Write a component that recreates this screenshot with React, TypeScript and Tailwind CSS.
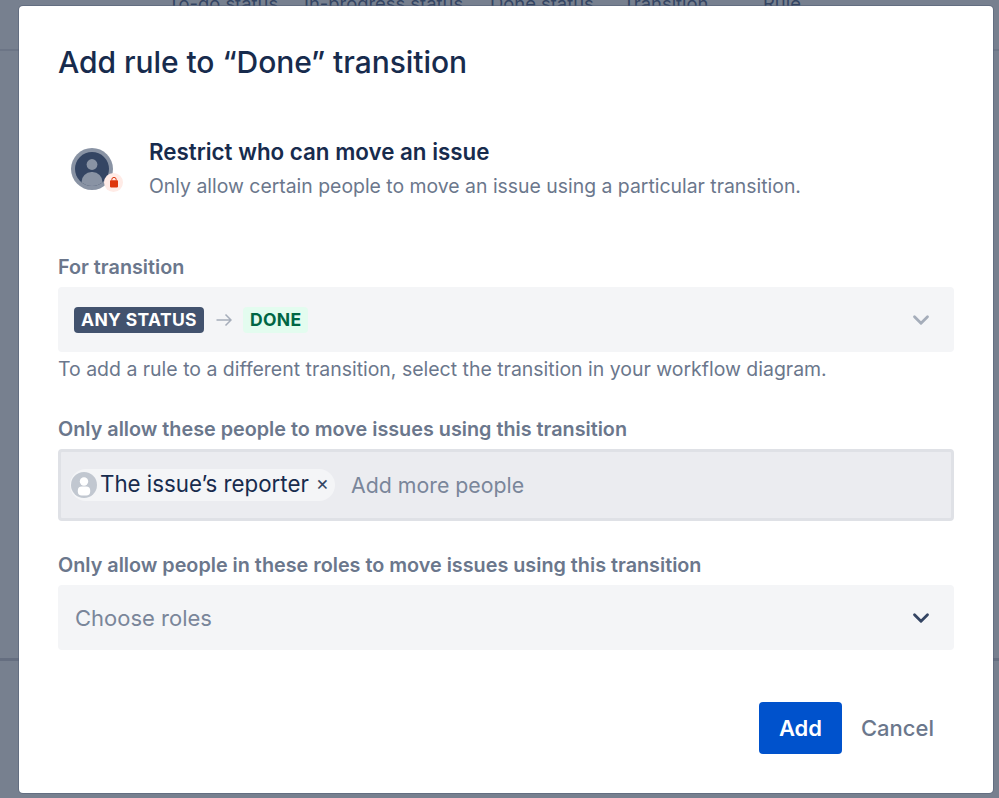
import { ChevronDown } from 'lucide-react'

const font = { fontFamily: 'Inter, "Liberation Sans", sans-serif' }

function RuleIcon() {
  return (
    <div className="relative h-[42px] w-[42px] rounded-full bg-[#8993a4] p-[4px]">
      <svg viewBox="0 0 34 34" className="h-[34px] w-[34px]">
        <defs>
          <clipPath id="rule-avatar">
            <circle cx="17" cy="17" r="17" />
          </clipPath>
        </defs>
        <g clipPath="url(#rule-avatar)">
          <rect width="34" height="34" fill="#344563" />
          <circle cx="17" cy="12.5" r="5.4" fill="#8993a4" />
          <rect x="6.5" y="20" width="21" height="20" rx="10" fill="#8993a4" />
        </g>
      </svg>
      <div className="absolute left-[33px] top-[25px] flex h-[19px] w-[19px] items-center justify-center rounded-full bg-[#ffebe6]">
        <svg viewBox="0 0 10 11" className="h-[11px] w-[10px]">
          <path d="M2.8 3.4V2.6a2.2 2.2 0 0 1 4.4 0v.8" fill="none" stroke="#de350b" strokeWidth="1" />
          <rect x="1" y="3.2" width="8" height="7.2" rx="0.8" fill="#de350b" />
        </svg>
      </div>
    </div>
  )
}

function SmallAvatar() {
  return (
    <svg viewBox="0 0 26 26" className="h-[26px] w-[26px] shrink-0">
      <circle cx="13" cy="13" r="13" fill="#c1c7d0" />
      <circle cx="13" cy="9.5" r="4.2" fill="#ffffff" />
      <rect x="6.8" y="14.5" width="12.4" height="9" rx="4" fill="#ffffff" />
    </svg>
  )
}

function Label({ children }: { children: React.ReactNode }) {
  return <div className="text-[19.8px] leading-[24px] font-semibold text-[#6b778c]">{children}</div>
}

export default function App() {
  return (
    <div className="relative h-[798px] w-[999px] overflow-hidden bg-[#77808f]" style={font}>
      {/* dimmed board behind the dialog */}
      <div className="flex h-[6px] gap-[26px] pl-[168px] text-[18.4px] leading-[6px] text-[#344563]">
        <span className="w-[110px] whitespace-nowrap">To-do status</span>
        <span className="w-[160px] whitespace-nowrap">In-progress status</span>
        <span className="w-[107px] whitespace-nowrap">Done status</span>
        <span className="w-[114px] whitespace-nowrap">Transition</span>
        <span className="whitespace-nowrap">Rule</span>
      </div>
      <div className="mt-[43px] h-[2px] bg-[#6c7586]" />
      <div className="mt-[607px] h-[3px] bg-[#656e80]" />

      <div className="absolute left-[19px] top-[6px] h-[787px] w-[974px] rounded-[4px] bg-white px-[39px] pt-[34px] shadow-[0_0_0_1px_rgba(80,92,115,0.5)]">
        <h1 className="text-[30px] leading-[44px] font-medium tracking-[-0.05px] text-[#172b4d]">
          Add rule to “Done” transition
        </h1>

        <div className="mt-[55px] flex items-center pl-[13px]">
          <RuleIcon />
          <div className="ml-[36px] -mt-[2px]">
            <div className="text-[22.35px] leading-[30px] font-semibold text-[#172b4d]">Restrict who can move an issue</div>
            <div className="mt-[7px] text-[19.4px] leading-[24px] text-[#6b778c]">
              Only allow certain people to move an issue using a particular transition.
            </div>
          </div>
        </div>

        <div className="mt-[57px]">
          <Label>For transition</Label>
          <div className="mt-[8px] flex h-[65px] w-[896px] items-center justify-between rounded-[4px] bg-[#f4f5f7] pl-[16px] pr-[20px]">
            <div className="flex items-center">
              <span className="flex h-[26px] items-center rounded-[4px] bg-[#42526e] px-[7px] pt-[1px] text-[17.5px] font-bold tracking-[0.35px] text-white">
                ANY STATUS
              </span>
              <svg viewBox="0 0 16 14" className="ml-[12px] h-[14px] w-[16px]">
                <path d="M0.5 7H15M9.5 1.5L15 7L9.5 12.5" fill="none" stroke="#a5adba" strokeWidth="1.5" />
              </svg>
              <span className="ml-[11px] flex h-[26px] items-center rounded-[4px] bg-[#e3fcef] px-[7px] pt-[1px] text-[17.5px] font-bold tracking-[0.35px] text-[#006644]">
                DONE
              </span>
            </div>
            <ChevronDown className="h-[26px] w-[26px] text-[#a5adba]" strokeWidth={2.6} />
          </div>
          <div className="mt-[5px] text-[19.47px] leading-[24px] text-[#6b778c]">
            To add a rule to a different transition, select the transition in your workflow diagram.
          </div>
        </div>

        <div className="mt-[36px]">
          <Label>Only allow these people to move issues using this transition</Label>
          <div className="mt-[8px] flex h-[72px] w-[896px] items-center rounded-[4px] border-[3px] border-[#dfe1e6] bg-[#ebecf0] pl-[9px]">
            <div className="flex h-[32px] items-center rounded-full bg-[#f4f5f7] pl-[1px] pr-[6px]">
              <SmallAvatar />
              <span className="ml-[3px] pb-[2px] text-[22.3px] leading-[30px] text-[#172b4d]">The issue’s reporter</span>
              <span className="ml-[7px] pb-[4px] text-[20px] leading-[30px] text-[#344563]">×</span>
            </div>
            <span className="ml-[16px] text-[21.3px] leading-[30px] text-[#7a869a]">Add more people</span>
          </div>
        </div>

        <div className="mt-[32px]">
          <Label>Only allow people in these roles to move issues using this transition</Label>
          <div className="mt-[8px] flex h-[65px] w-[896px] items-center justify-between rounded-[4px] bg-[#f4f5f7] pl-[17px] pr-[20px]">
            <span className="text-[22px] leading-[30px] text-[#7a869a]">Choose roles</span>
            <ChevronDown className="h-[26px] w-[26px] text-[#344563]" strokeWidth={2.6} />
          </div>
        </div>

        <div className="mt-[52px] flex w-[896px] items-center justify-end pr-[20px]">
          <button className="flex h-[52px] w-[83px] items-center justify-center rounded-[4px] bg-[#0052cc] text-[22px] font-semibold text-white">
            Add
          </button>
          <span className="ml-[19px] text-[22px] font-medium text-[#6b778c]">Cancel</span>
        </div>
      </div>
    </div>
  )
}
